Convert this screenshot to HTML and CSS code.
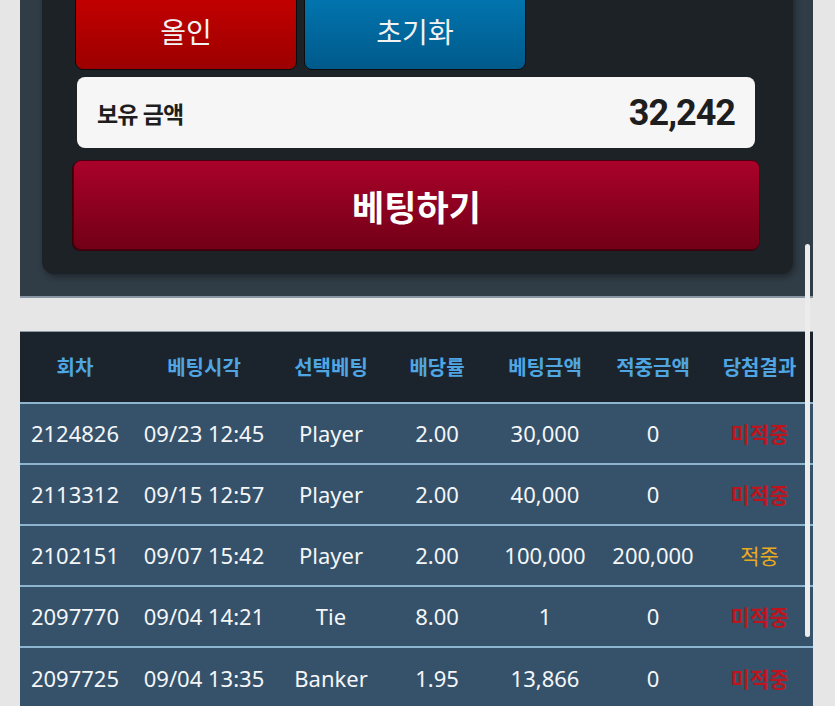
FILE: index.html
```html
<!DOCTYPE html>
<html lang="ko">
<head>
    <meta charset="UTF-8">
    <meta name="viewport" content="width=device-width, initial-scale=1.0">
    <title>베팅</title>
    <link rel="stylesheet" href="styles.css">
</head>
<body>
    <div class="page">
        <!-- Bet panel -->
        <div class="bet-panel">
            <div class="bet-inner">
                <div class="quick-buttons">
                    <button class="quick-btn allin">올인</button>
                    <button class="quick-btn reset">초기화</button>
                </div>
                <div class="balance">
                    <span class="balance-label">보유 금액</span>
                    <span class="balance-value">32,242</span>
                </div>
                <button class="bet-btn">베팅하기</button>
            </div>
        </div>

        <!-- History -->
        <table class="history">
            <colgroup>
                <col class="c-round">
                <col class="c-time">
                <col class="c-pick">
                <col class="c-odds">
                <col class="c-amount">
                <col class="c-win">
                <col class="c-result">
            </colgroup>
            <thead>
                <tr>
                    <th>회차</th>
                    <th>베팅시각</th>
                    <th>선택베팅</th>
                    <th>배당률</th>
                    <th>베팅금액</th>
                    <th>적중금액</th>
                    <th>당첨결과</th>
                </tr>
            </thead>
            <tbody>
                <tr>
                    <td>2124826</td>
                    <td>09/23 12:45</td>
                    <td>Player</td>
                    <td>2.00</td>
                    <td>30,000</td>
                    <td>0</td>
                    <td class="lose">미적중</td>
                </tr>
                <tr>
                    <td>2113312</td>
                    <td>09/15 12:57</td>
                    <td>Player</td>
                    <td>2.00</td>
                    <td>40,000</td>
                    <td>0</td>
                    <td class="lose">미적중</td>
                </tr>
                <tr>
                    <td>2102151</td>
                    <td>09/07 15:42</td>
                    <td>Player</td>
                    <td>2.00</td>
                    <td>100,000</td>
                    <td>200,000</td>
                    <td class="win">적중</td>
                </tr>
                <tr>
                    <td>2097770</td>
                    <td>09/04 14:21</td>
                    <td>Tie</td>
                    <td>8.00</td>
                    <td>1</td>
                    <td>0</td>
                    <td class="lose">미적중</td>
                </tr>
                <tr>
                    <td>2097725</td>
                    <td>09/04 13:35</td>
                    <td>Banker</td>
                    <td>1.95</td>
                    <td>13,866</td>
                    <td>0</td>
                    <td class="lose">미적중</td>
                </tr>
            </tbody>
        </table>
    </div>

    <div class="scroll-thumb"></div>
</body>
</html>
```

FILE: styles.css
```css
* {
    margin: 0;
    padding: 0;
    box-sizing: border-box;
}

body {
    background-color: #e6e6e6;
    font-family: "Noto Sans", "Noto Sans CJK KR", sans-serif;
    overflow: hidden;
    height: 706px;
}

.page {
    width: 793px;
    margin-left: 20px;
    margin-top: -40px;
}

.bet-panel {
    background-color: #303c46;
    padding: 0 20px 22px 22px;
    border-bottom: 2px solid #8796a2;
}

.bet-inner {
    background-color: #1c2226;
    border-radius: 0 0 12px 12px;
    padding: 30px 33px 24px 31px;
    box-shadow: 2px 3px 6px rgba(0, 0, 0, 0.35);
}

.quick-buttons {
    display: flex;
    gap: 7px;
    padding-left: 2px;
}

.quick-btn {
    width: 222px;
    height: 80px;
    padding-top: 2px;
    border: 1px solid #0b0d0f;
    border-radius: 8px;
    color: #f2f2f2;
    font-family: "Noto Sans CJK KR", sans-serif;
    font-size: 28px;
}

.allin {
    background: linear-gradient(#c60000, #9c0000);
}

.reset {
    background: linear-gradient(#0277b2, #005a8b);
}

.balance {
    display: flex;
    justify-content: space-between;
    align-items: center;
    height: 71px;
    margin: 7px 5px 0 4px;
    padding: 0 20px;
    background-color: #f6f6f6;
    border-radius: 8px;
    color: #1e1e1e;
}

.balance-label {
    font-family: "Noto Sans CJK KR", sans-serif;
    font-weight: bold;
    font-size: 23px;
    letter-spacing: -1px;
}

.balance-value {
    font-family: Roboto, sans-serif;
    font-weight: bold;
    font-size: 36px;
    letter-spacing: -1px;
}

.bet-btn {
    display: block;
    width: 100%;
    height: 90px;
    margin-top: 12px;
    border: 1px solid #4a0010;
    border-radius: 8px;
    background: linear-gradient(#aa022a, #720017);
    color: #ffffff;
    font-family: "Noto Sans CJK KR", sans-serif;
    font-weight: bold;
    font-size: 35px;
    box-shadow: -1px 1px 0 #3a0008;
}

.history {
    width: 793px;
    margin-top: 33px;
    border-collapse: collapse;
    table-layout: fixed;
    color: #f4f6f8;
    border-top: 1px solid #8b99a3;
}

.c-round { width: 110px; }
.c-time { width: 148px; }
.c-pick { width: 106px; }
.c-odds { width: 106px; }
.c-amount { width: 110px; }
.c-win { width: 106px; }
.c-result { width: 107px; }

.history th {
    height: 71px;
    background-color: #1b242c;
    color: #4fa6e2;
    font-family: "Noto Sans CJK KR", sans-serif;
    font-weight: bold;
    font-size: 20px;
    white-space: nowrap;
}

.history td {
    height: 61px;
    background-color: #36526a;
    border-top: 2px solid #8db5d0;
    text-align: center;
    font-size: 22px;
    white-space: nowrap;
}

.history td.lose {
    color: #bd141e;
    font-family: "Noto Sans CJK KR", sans-serif;
    font-weight: bold;
    font-size: 21px;
}

.history td.win {
    color: #eba91c;
    font-family: "Noto Sans CJK KR", sans-serif;
    font-size: 21px;
}

.scroll-thumb {
    position: absolute;
    left: 805px;
    top: 244px;
    width: 5px;
    height: 393px;
    border-radius: 3px;
    background-color: #ececec;
}
```
